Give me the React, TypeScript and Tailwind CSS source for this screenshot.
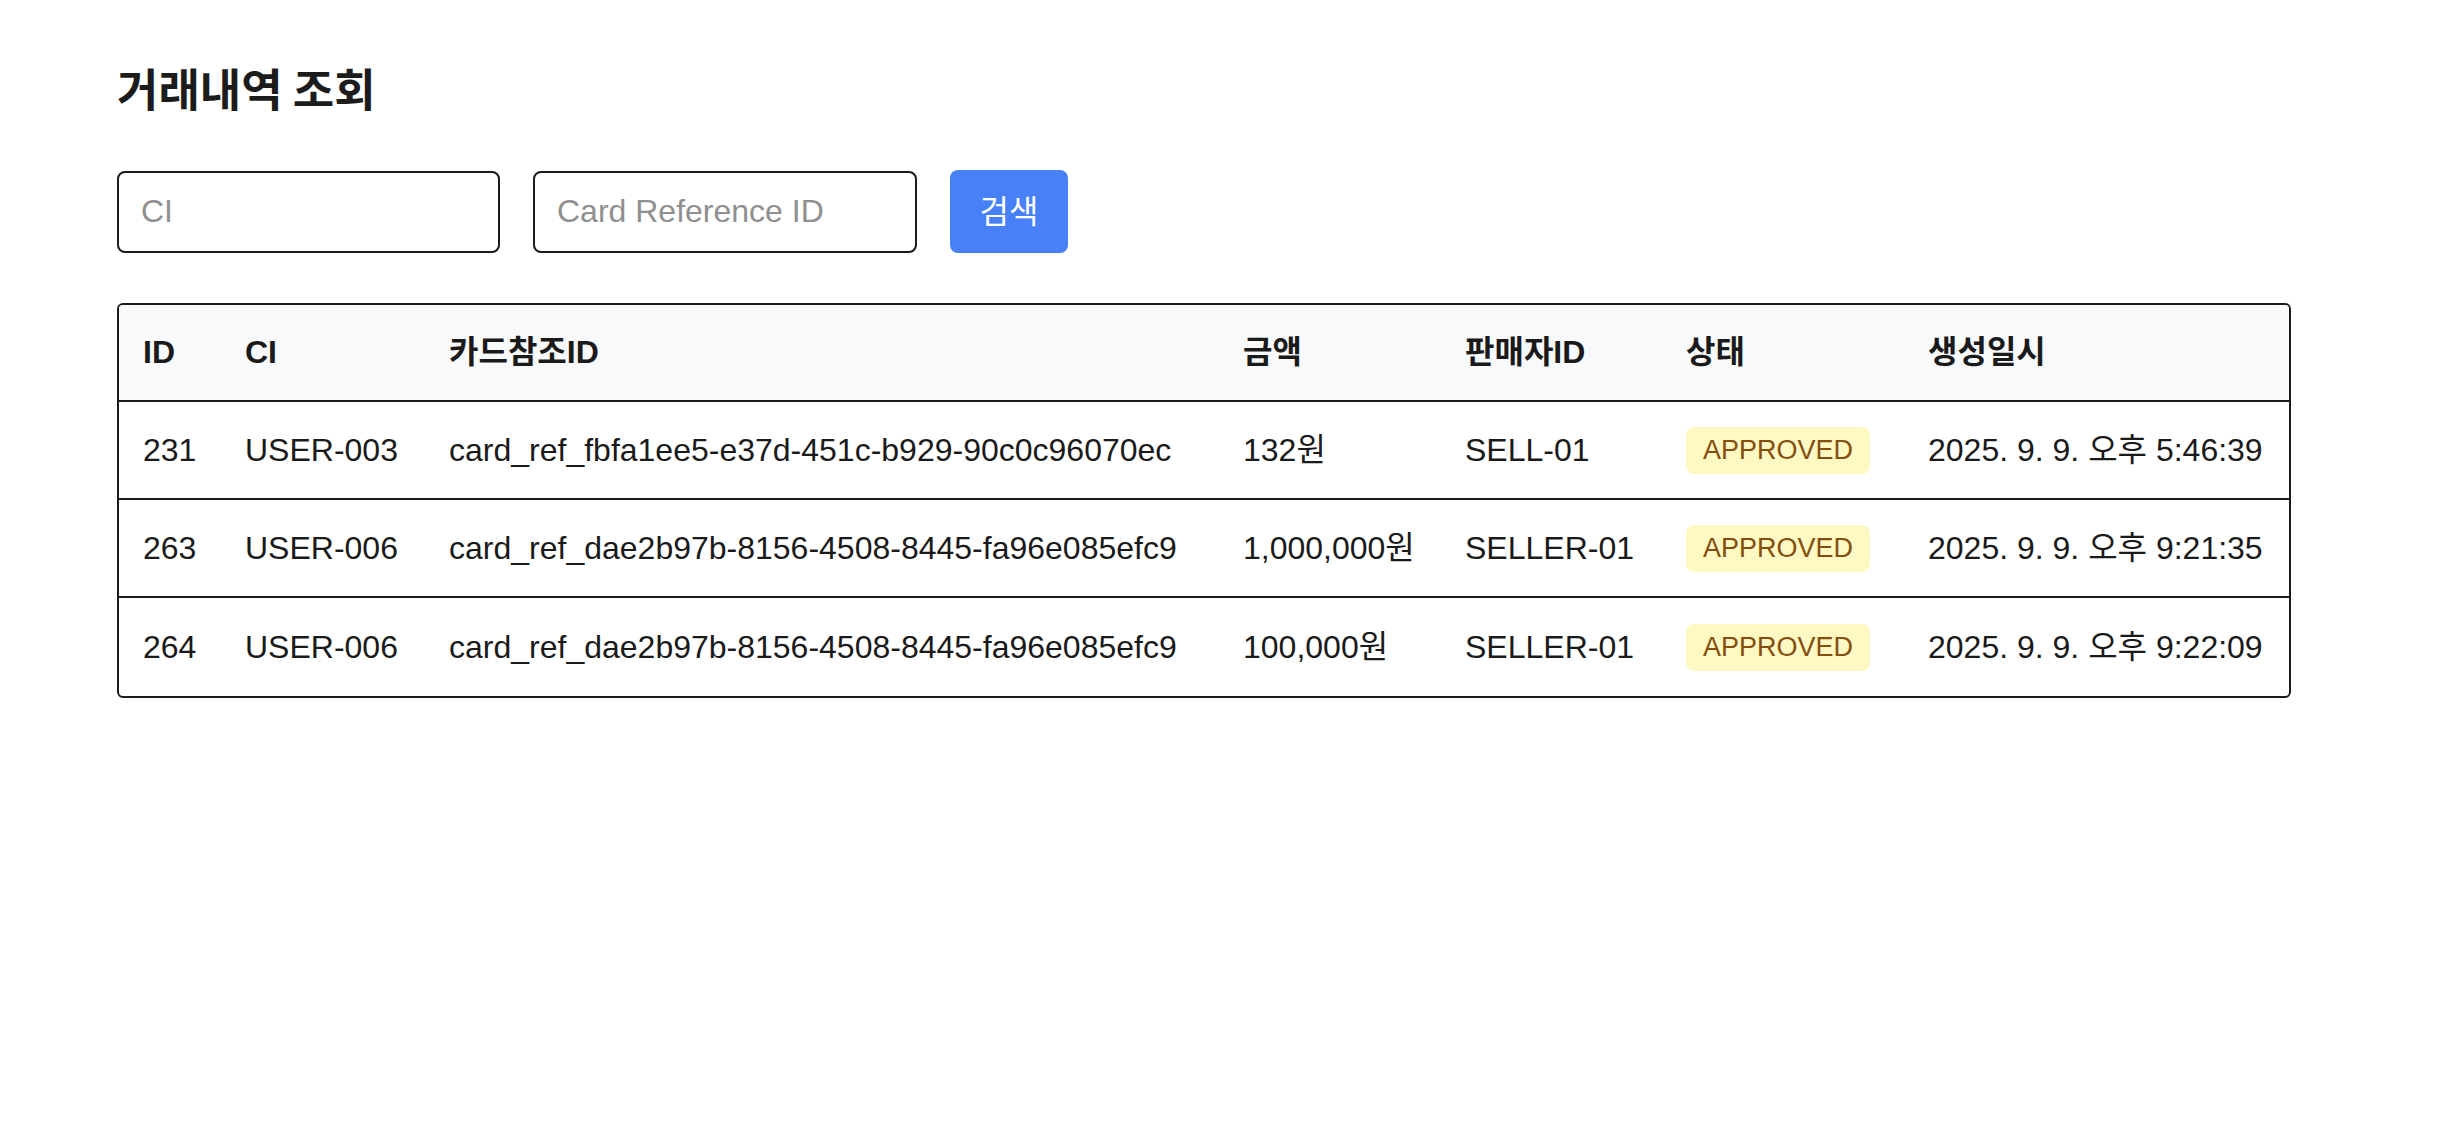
import React, { useState } from 'react';

interface Transaction {
	id: number;
	ci: string;
	cardRefId: string;
	amount: string;
	sellerId: string;
	status: string;
	createdAt: string;
}

const transactions: Transaction[] = [
	{
		id: 231,
		ci: 'USER-003',
		cardRefId: 'card_ref_fbfa1ee5-e37d-451c-b929-90c0c96070ec',
		amount: '132원',
		sellerId: 'SELL-01',
		status: 'APPROVED',
		createdAt: '2025. 9. 9. 오후 5:46:39',
	},
	{
		id: 263,
		ci: 'USER-006',
		cardRefId: 'card_ref_dae2b97b-8156-4508-8445-fa96e085efc9',
		amount: '1,000,000원',
		sellerId: 'SELLER-01',
		status: 'APPROVED',
		createdAt: '2025. 9. 9. 오후 9:21:35',
	},
	{
		id: 264,
		ci: 'USER-006',
		cardRefId: 'card_ref_dae2b97b-8156-4508-8445-fa96e085efc9',
		amount: '100,000원',
		sellerId: 'SELLER-01',
		status: 'APPROVED',
		createdAt: '2025. 9. 9. 오후 9:22:09',
	},
];

const headers = ['ID', 'CI', '카드참조ID', '금액', '판매자ID', '상태', '생성일시'];

// column widths shared by header and rows
const rowGrid = 'grid grid-cols-[102px_204px_794px_222px_221px_242px_385px] items-center';

export default function App() {
	const [ci, setCi] = useState('');
	const [cardRef, setCardRef] = useState('');

	return (
		<div className="min-h-screen bg-white px-[117px] pt-[63px] font-['Liberation_Sans','Noto_Sans_CJK_KR',sans-serif] text-[#1a1a1a]">
			{/* Title */}
			<h1 className="font-['Noto_Sans_CJK_KR',sans-serif] text-[45px] font-bold leading-[50px] text-[#1c1c1c]">
				거래내역 조회
			</h1>

			{/* Search bar */}
			<div className="mt-[57px] flex items-center gap-[33px]">
				<input
					value={ci}
					onChange={(e) => setCi(e.target.value)}
					placeholder="CI"
					className="h-[82px] w-[383px] rounded-[8px] border-2 border-[#1a1a1a] px-[22px] text-[32px] outline-none placeholder:text-[#8f8f8f]"
				/>
				<input
					value={cardRef}
					onChange={(e) => setCardRef(e.target.value)}
					placeholder="Card Reference ID"
					className="h-[82px] w-[384px] rounded-[8px] border-2 border-[#1a1a1a] px-[22px] text-[32px] outline-none placeholder:text-[#8f8f8f]"
				/>
				<button className="h-[83px] w-[118px] rounded-[8px] bg-[#4881f7] text-[32px] text-white">
					검색
				</button>
			</div>

			{/* Table */}
			<div className="mt-[50px] w-[2174px] overflow-hidden rounded-[6px] border-2 border-[#1a1a1a]">
				<div className={`${rowGrid} h-[97px] border-b-2 border-[#1a1a1a] bg-[#f8f9fa]`}>
					{headers.map((h) => (
						<div key={h} className="px-6 text-[32px] font-bold leading-[37px]">
							{h}
						</div>
					))}
				</div>
				{transactions.map((t, i) => (
					<div
						key={t.id}
						className={`${rowGrid} h-[98px] text-[32px] leading-[37px] ${
							i < transactions.length - 1 ? 'border-b-2 border-[#1a1a1a]' : ''
						}`}
					>
						<div className="px-6">{t.id}</div>
						<div className="px-6">{t.ci}</div>
						<div className="whitespace-nowrap px-6">{t.cardRefId}</div>
						<div className="whitespace-nowrap px-6">{t.amount}</div>
						<div className="px-6">{t.sellerId}</div>
						<div className="px-6">
							<span className="inline-block rounded-[8px] bg-[#fef9c3] px-[17px] py-2 text-[27px] leading-[31px] text-[#854d0e]">
								{t.status}
							</span>
						</div>
						<div className="whitespace-nowrap px-6">{t.createdAt}</div>
					</div>
				))}
			</div>
		</div>
	);
}
